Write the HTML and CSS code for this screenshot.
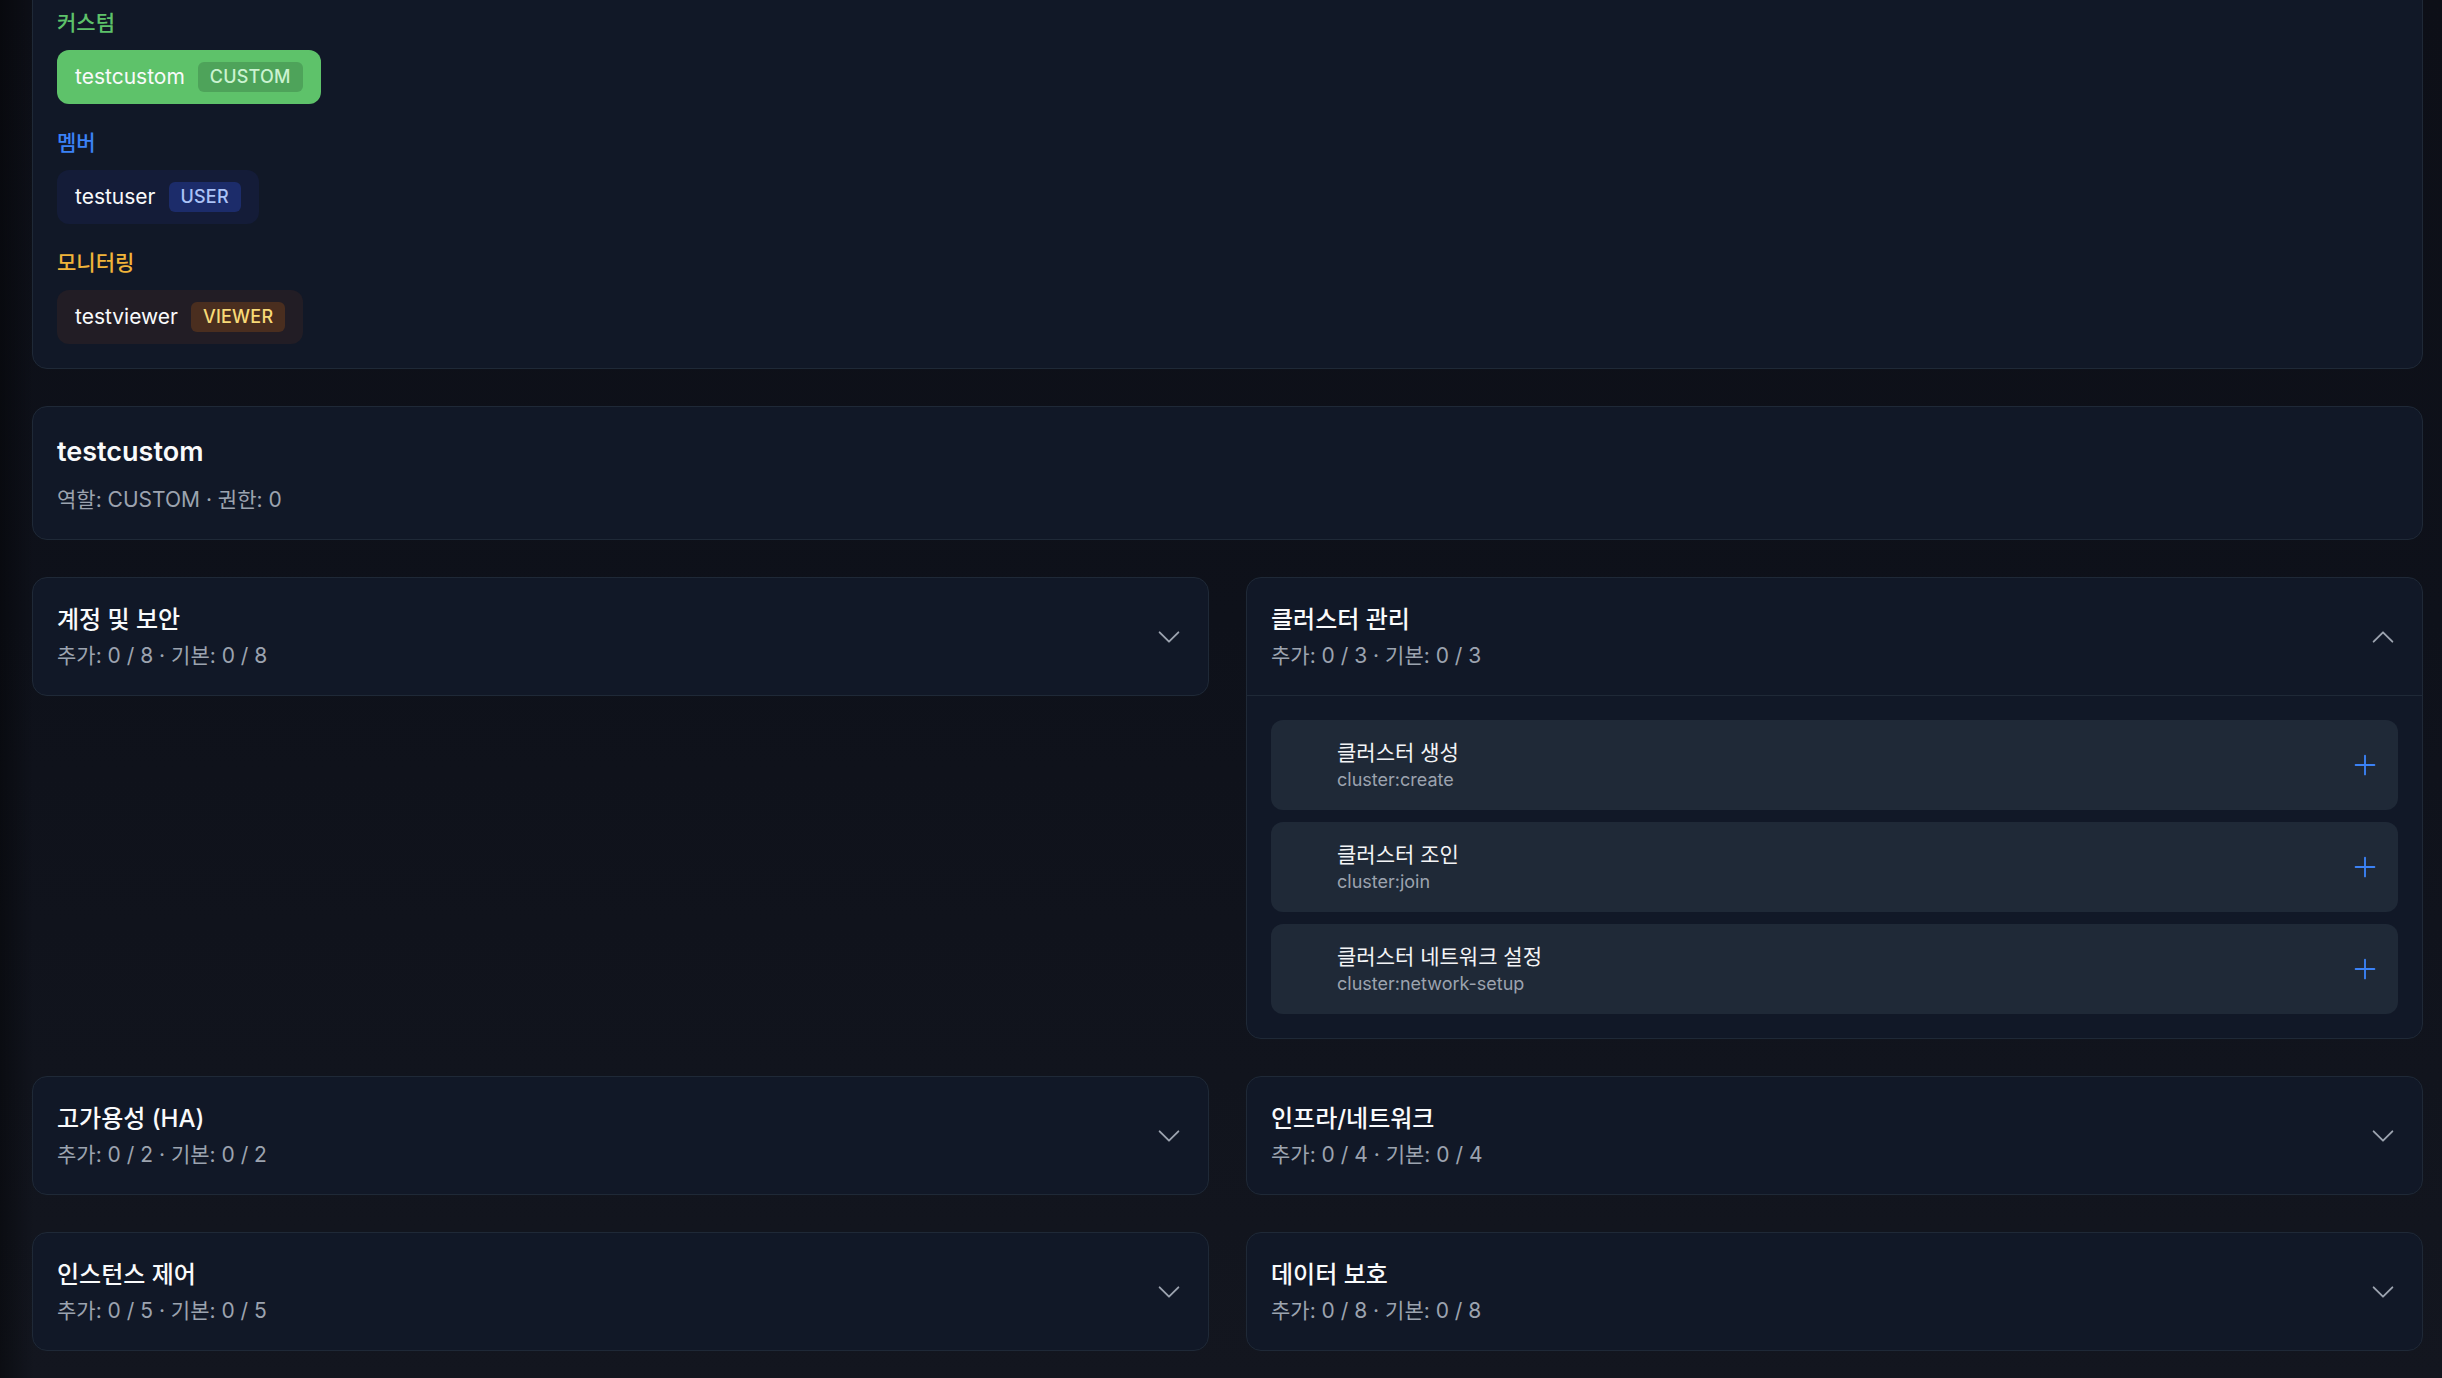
FILE: index.html
```html
<!DOCTYPE html>
<html lang="ko">
<head>
<meta charset="utf-8">
<title>권한 관리</title>
<link rel="stylesheet" href="styles.css">
</head>
<body>
<main class="page">
  <section class="card roles">
    <div class="role-group">
      <div class="group-label label-custom">커스텀</div>
      <div class="chips">
        <span class="chip chip-custom">testcustom <span class="tag">CUSTOM</span></span>
      </div>
    </div>
    <div class="role-group">
      <div class="group-label label-user">멤버</div>
      <div class="chips">
        <span class="chip chip-user">testuser <span class="tag">USER</span></span>
      </div>
    </div>
    <div class="role-group">
      <div class="group-label label-viewer">모니터링</div>
      <div class="chips">
        <span class="chip chip-viewer">testviewer <span class="tag">VIEWER</span></span>
      </div>
    </div>
  </section>

  <section class="card summary">
    <h2 class="summary-title">testcustom</h2>
    <p class="summary-meta">역할: CUSTOM · 권한: 0</p>
  </section>

  <div class="groups">
    <section class="card group">
      <header class="group-head">
        <div>
          <h3 class="group-title">계정 및 보안</h3>
          <p class="group-meta">추가: 0 / 8 · 기본: 0 / 8</p>
        </div>
        <svg class="chev" viewBox="0 0 24 24" fill="none" stroke="currentColor" stroke-width="1.5"><path stroke-linecap="round" stroke-linejoin="round" d="m19.5 8.25-7.5 7.5-7.5-7.5"/></svg>
      </header>
    </section>

    <section class="card group">
      <header class="group-head open">
        <div>
          <h3 class="group-title">클러스터 관리</h3>
          <p class="group-meta">추가: 0 / 3 · 기본: 0 / 3</p>
        </div>
        <svg class="chev" viewBox="0 0 24 24" fill="none" stroke="currentColor" stroke-width="1.5"><path stroke-linecap="round" stroke-linejoin="round" d="m4.5 15.75 7.5-7.5 7.5 7.5"/></svg>
      </header>
      <div class="perm-list">
        <div class="perm">
          <span class="perm-slot"></span>
          <div class="perm-text">
            <div class="perm-name">클러스터 생성</div>
            <div class="perm-key">cluster:create</div>
          </div>
          <svg class="plus" viewBox="0 0 24 24" fill="none" stroke="currentColor" stroke-width="1.5"><path stroke-linecap="round" stroke-linejoin="round" d="M12 4.5v15m7.5-7.5h-15"/></svg>
        </div>
        <div class="perm">
          <span class="perm-slot"></span>
          <div class="perm-text">
            <div class="perm-name">클러스터 조인</div>
            <div class="perm-key">cluster:join</div>
          </div>
          <svg class="plus" viewBox="0 0 24 24" fill="none" stroke="currentColor" stroke-width="1.5"><path stroke-linecap="round" stroke-linejoin="round" d="M12 4.5v15m7.5-7.5h-15"/></svg>
        </div>
        <div class="perm">
          <span class="perm-slot"></span>
          <div class="perm-text">
            <div class="perm-name">클러스터 네트워크 설정</div>
            <div class="perm-key">cluster:network-setup</div>
          </div>
          <svg class="plus" viewBox="0 0 24 24" fill="none" stroke="currentColor" stroke-width="1.5"><path stroke-linecap="round" stroke-linejoin="round" d="M12 4.5v15m7.5-7.5h-15"/></svg>
        </div>
      </div>
    </section>

    <section class="card group">
      <header class="group-head">
        <div>
          <h3 class="group-title">고가용성 (HA)</h3>
          <p class="group-meta">추가: 0 / 2 · 기본: 0 / 2</p>
        </div>
        <svg class="chev" viewBox="0 0 24 24" fill="none" stroke="currentColor" stroke-width="1.5"><path stroke-linecap="round" stroke-linejoin="round" d="m19.5 8.25-7.5 7.5-7.5-7.5"/></svg>
      </header>
    </section>

    <section class="card group">
      <header class="group-head">
        <div>
          <h3 class="group-title">인프라/네트워크</h3>
          <p class="group-meta">추가: 0 / 4 · 기본: 0 / 4</p>
        </div>
        <svg class="chev" viewBox="0 0 24 24" fill="none" stroke="currentColor" stroke-width="1.5"><path stroke-linecap="round" stroke-linejoin="round" d="m19.5 8.25-7.5 7.5-7.5-7.5"/></svg>
      </header>
    </section>

    <section class="card group">
      <header class="group-head">
        <div>
          <h3 class="group-title">인스턴스 제어</h3>
          <p class="group-meta">추가: 0 / 5 · 기본: 0 / 5</p>
        </div>
        <svg class="chev" viewBox="0 0 24 24" fill="none" stroke="currentColor" stroke-width="1.5"><path stroke-linecap="round" stroke-linejoin="round" d="m19.5 8.25-7.5 7.5-7.5-7.5"/></svg>
      </header>
    </section>

    <section class="card group">
      <header class="group-head">
        <div>
          <h3 class="group-title">데이터 보호</h3>
          <p class="group-meta">추가: 0 / 8 · 기본: 0 / 8</p>
        </div>
        <svg class="chev" viewBox="0 0 24 24" fill="none" stroke="currentColor" stroke-width="1.5"><path stroke-linecap="round" stroke-linejoin="round" d="m19.5 8.25-7.5 7.5-7.5-7.5"/></svg>
      </header>
    </section>
  </div>
</main>
</body>
</html>
```

FILE: styles.css
```css
* { box-sizing: border-box; }

html, body {
  margin: 0;
  height: 100%;
}

body {
  font-family: Inter, "Noto Sans CJK KR", sans-serif;
  color: #f3f4f6;
  background:
    linear-gradient(90deg, rgba(0, 0, 0, 0.4) 0, rgba(0, 0, 0, 0) 34px),
    linear-gradient(180deg, #0d0f17 0%, #0e111a 45%, #13161f 100%);
  overflow: hidden;
}

.page {
  display: flex;
  flex-direction: column;
  gap: 37px;
  padding: 0 19px 0 32px;
  margin-top: -17px;
}

.card {
  background: #111827;
  border: 1px solid #1f2937;
  border-radius: 15px;
}

/* role chips */
.roles {
  padding: 24px;
  display: flex;
  flex-direction: column;
  gap: 24px;
}

.group-label {
  font-size: 21px;
  line-height: 30px;
  font-weight: 500;
  margin-bottom: 12px;
}
.label-custom { color: #5ec26a; }
.label-user { color: #3b82f6; }
.label-viewer { color: #f0b43a; }

.chips {
  display: flex;
  gap: 12px;
}

.chip {
  display: inline-flex;
  align-items: center;
  gap: 13px;
  padding: 12px 18px;
  border-radius: 12px;
  font-size: 21px;
  line-height: 30px;
  color: #f9fafb;
}

.tag {
  display: inline-block;
  font-size: 18px;
  line-height: 24px;
  font-weight: 500;
  letter-spacing: 0.2px;
  padding: 3px 12px;
  border-radius: 6px;
}

.chip-custom { background: #5ec26a; }
.chip-custom .tag { background: #4ea35a; color: #cbf3d1; }
.chip-user { background: #141c38; }
.chip-user .tag { background: #1c2c6a; color: #abc3f7; }
.chip-viewer { background: #221d25; }
.chip-viewer .tag { background: #4a2e1f; color: #f8da77; }

/* selected account summary */
.summary {
  padding: 24px;
}
.summary-title {
  margin: 0;
  font-size: 27px;
  line-height: 42px;
  font-weight: 600;
  color: #f9fafb;
}
.summary-meta {
  margin: 12px 0 0;
  font-size: 21px;
  line-height: 30px;
  color: #9ca3af;
}

/* permission groups */
.groups {
  display: grid;
  grid-template-columns: 1fr 1fr;
  gap: 37px;
  align-items: start;
}

.group-head {
  display: flex;
  align-items: center;
  justify-content: space-between;
  padding: 24px;
}
.group-head.open {
  border-bottom: 1px solid #1f2937;
}

.group-title {
  margin: 0;
  font-size: 24px;
  line-height: 36px;
  font-weight: 500;
  color: #f9fafb;
}
.group-meta {
  margin: 3px 0 0;
  font-size: 21px;
  line-height: 30px;
  color: #9ca3af;
}

.chev {
  width: 30px;
  height: 30px;
  color: #9ca3af;
  flex: none;
}

.perm-list {
  padding: 24px;
  display: flex;
  flex-direction: column;
  gap: 12px;
}

.perm {
  display: flex;
  align-items: center;
  gap: 18px;
  padding: 18px;
  background: #1f2937;
  border-radius: 12px;
}

.perm-slot {
  width: 30px;
  height: 30px;
  flex: none;
}

.perm-text {
  flex: 1;
}

.perm-name {
  font-size: 21px;
  line-height: 30px;
  color: #f3f4f6;
}
.perm-key {
  font-size: 18px;
  line-height: 24px;
  color: #9ca3af;
}

.plus {
  width: 30px;
  height: 30px;
  color: #3b82f6;
  flex: none;
}
```
